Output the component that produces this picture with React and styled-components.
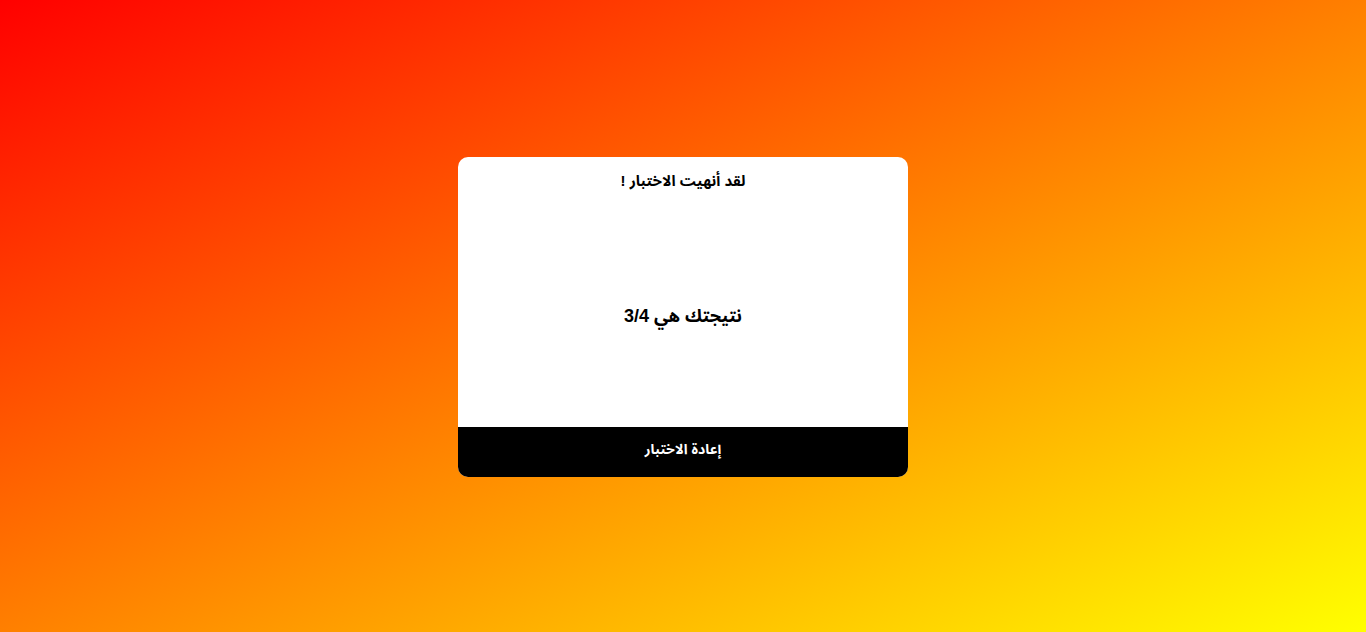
import React from 'react';
import styled, { createGlobalStyle } from 'styled-components';

const GlobalStyle = createGlobalStyle`
  html, body {
    margin: 0;
    padding: 0;
    height: 100%;
  }
  body {
    font-family: "Liberation Sans", "Noto Sans Arabic", "DejaVu Sans", Arial, sans-serif;
  }
  #root {
    height: 100%;
  }
`

const Page = styled.div`
  height: 100vh;
  box-sizing: border-box;
  padding-top: 2px;
  display: flex;
  align-items: center;
  justify-content: center;
  background: linear-gradient(to bottom right, #ff0000, #ffff00);
`
const Card = styled.div`
  width: 450px;
  height: 320px;
  background: #fff;
  border-radius: 10px;
  overflow: hidden;
  display: flex;
  flex-direction: column;
  direction: rtl;
`
const Title = styled.h3`
  margin: 0;
  padding-top: 14px;
  line-height: 20px;
  text-align: center;
  font-size: 15px;
  font-weight: bold;
  color: #000;
`
const Body = styled.div`
  flex: 1;
  display: flex;
  align-items: center;
  justify-content: center;
  padding-top: 14px;
`
const Score = styled.div`
  font-size: 18px;
  line-height: 24px;
  font-weight: bold;
  color: #000;
`
const RestartButton = styled.button`
  height: 50px;
  padding: 0 0 6px;
  border: none;
  background: #000;
  color: #fff;
  font-family: inherit;
  font-size: 14px;
  line-height: 20px;
  font-weight: bold;
  cursor: pointer;
`

const App = () => {
  return (
    <Page>
      <GlobalStyle />
      <Card>
        <Title>لقد أنهيت الاختبار !</Title>
        <Body>
          <Score>نتيجتك هي 3/4</Score>
        </Body>
        <RestartButton>إعادة الاختبار</RestartButton>
      </Card>
    </Page>
  );
}

export default App;
